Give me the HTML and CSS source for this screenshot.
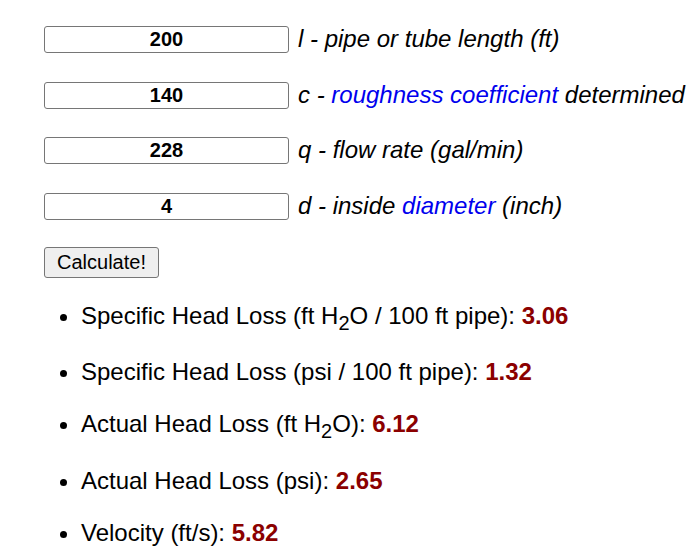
FILE: index.html
```html
<!DOCTYPE html>
<html lang="en">
<head>
    <meta charset="UTF-8">
    <title>Hazen-Williams Calculator</title>
    <link rel="stylesheet" href="styles.css">
</head>
<body>
    <div class="calc">
        <div class="row">
            <input type="text" class="num" value="200">
            <span class="label">l - pipe or tube length (ft)</span>
        </div>
        <div class="row">
            <input type="text" class="num" value="140">
            <span class="label">c - <a href="#">roughness coefficient</a> determined</span>
        </div>
        <div class="row">
            <input type="text" class="num" value="228">
            <span class="label">q - flow rate (gal/min)</span>
        </div>
        <div class="row">
            <input type="text" class="num" value="4">
            <span class="label">d - inside <a href="#">diameter</a> (inch)</span>
        </div>
        <button class="calc-btn">Calculate!</button>

        <ul class="results">
            <li>Specific Head Loss (ft H<sub>2</sub>O / 100 ft pipe): <b>3.06</b></li>
            <li>Specific Head Loss (psi / 100 ft pipe): <b>1.32</b></li>
            <li>Actual Head Loss (ft H<sub>2</sub>O): <b>6.12</b></li>
            <li>Actual Head Loss (psi): <b>2.65</b></li>
            <li>Velocity (ft/s): <b>5.82</b></li>
        </ul>
    </div>
</body>
</html>
```

FILE: styles.css
```css
body {
    font-family: "Liberation Sans", Arial, sans-serif;
    margin: 0;
    padding: 0;
    color: #000;
    background: #fff;
}

.calc {
    padding: 26px 0 0 44px;
}

.row {
    display: flex;
    align-items: center;
    gap: 9px;
    height: 27px;
    margin-bottom: 28.5px;
}

.num {
    width: 245px;
    height: 27px;
    box-sizing: border-box;
    border: 1px solid #767676;
    border-radius: 3px;
    font-family: "Liberation Sans", Arial, sans-serif;
    font-size: 20px;
    font-weight: bold;
    text-align: center;
    padding: 0;
    margin: 0;
}

.label {
    font-size: 24px;
    font-style: italic;
    white-space: nowrap;
    margin-top: -1px;
}

.label a {
    color: #0000ee;
    text-decoration: none;
}

.calc-btn {
    display: block;
    margin-top: -1.5px;
    height: 31px;
    padding: 0 12px;
    font-family: "Liberation Sans", Arial, sans-serif;
    font-size: 20px;
    background: #efefef;
    border: 1px solid #767676;
    border-radius: 3px;
    color: #000;
}

.results {
    margin: 24px 0 0 0;
    padding-left: 37px;
}

.results li {
    font-size: 24px;
    margin-bottom: 24px;
}

.results b {
    color: #8b0000;
}
```
